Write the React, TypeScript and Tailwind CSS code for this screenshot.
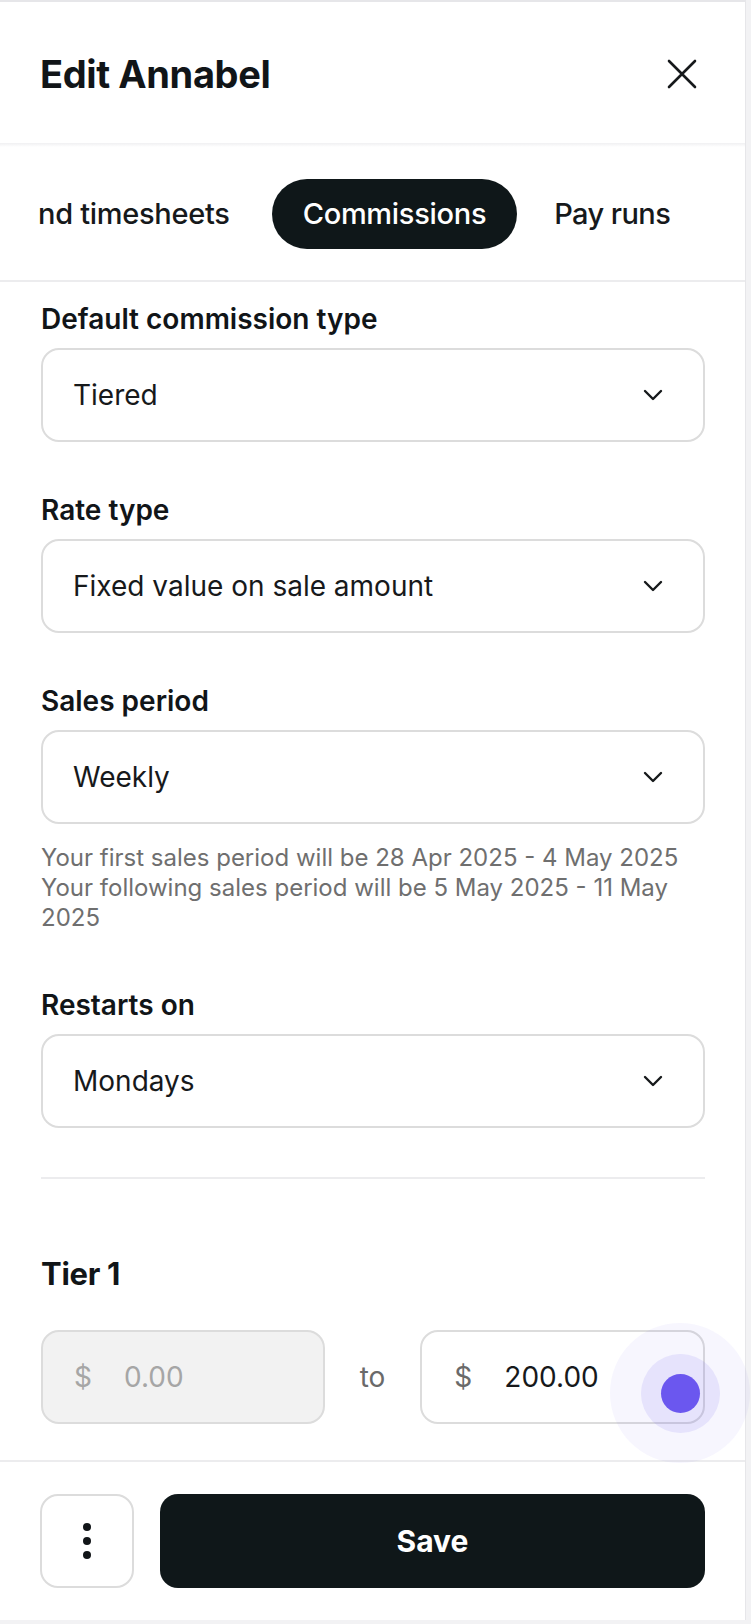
import React from "react";

function Chevron() {
  return (
    <svg width="20" height="12" viewBox="0 0 20 12" fill="none">
      <path d="M2 2 L10 10 L18 2" stroke="#16191b" strokeWidth="2.4" strokeLinecap="round" strokeLinejoin="round" />
    </svg>
  );
}

function Select({ value }: { value: string }) {
  return (
    <div className="mt-[13px] flex h-[94px] items-center justify-between rounded-[18px] border-2 border-[#dcdcdc] bg-white pl-[30px] pr-[40px]">
      <span className="text-[28px] leading-[36px] text-[#17191b]">{value}</span>
      <Chevron />
    </div>
  );
}

function Label({ children, className = "" }: { children: React.ReactNode; className?: string }) {
  return (
    <div className={"text-[28px] font-semibold leading-[32px] text-[#111518] " + className}>
      {children}
    </div>
  );
}

export default function App() {
  return (
    <div className="relative h-[1624px] w-[751px] overflow-hidden bg-[#f2f2f4] font-['Inter',sans-serif]">
      <div className="flex h-[1620px] w-[746px] flex-col border-r border-t-2 border-[#e6e6e9] bg-white">
        {/* Header */}
        <div className="flex h-[141px] items-center justify-between pl-[40px] pr-[48px] pt-[2px]">
          <h1 className="text-[38px] font-bold leading-[44px] tracking-[-0.01em] text-[#111518]">Edit Annabel</h1>
          <svg width="30" height="30" viewBox="0 0 30 30" fill="none">
            <path d="M2 2 L28 28 M28 2 L2 28" stroke="#16191b" strokeWidth="2.6" strokeLinecap="round" />
          </svg>
        </div>
        <div className="h-[4px] bg-gradient-to-b from-[#f0f0f2] to-white" />

        {/* Tabs */}
        <div className="flex h-[135px] items-center overflow-hidden whitespace-nowrap border-b-2 border-[#ececee] pl-[38px]">
          <span className="text-[29px] font-medium leading-[36px] tracking-[-0.01em] text-[#16191b]">nd timesheets</span>
          <span className="ml-[42px] flex h-[70px] items-center rounded-full bg-[#0f1719] px-[31px] text-[29px] font-medium leading-[36px] tracking-[-0.01em] text-white">
            Commissions
          </span>
          <span className="ml-[37px] text-[29px] font-medium leading-[36px] tracking-[-0.02em] text-[#16191b]">Pay runs</span>
        </div>

        {/* Content */}
        <div className="flex-1 overflow-hidden pl-[41px] pr-[40px] pt-[21px]">
          <Label>Default commission type</Label>
          <Select value="Tiered" />

          <Label className="mt-[52px]">Rate type</Label>
          <Select value="Fixed value on sale amount" />

          <Label className="mt-[52px]">Sales period</Label>
          <Select value="Weekly" />
          <p className="mt-[19px] text-[24px] leading-[30px] text-[#6f6f6f]">
            Your first sales period will be 28 Apr 2025 - 4 May 2025
            <br />
            Your following sales period will be 5 May 2025 - 11 May 2025
          </p>

          <Label className="mt-[56px]">Restarts on</Label>
          <Select value="Mondays" />

          <div className="mt-[49px] h-[2px] bg-[#ececee]" />

          <div className="mt-[76px] text-[31px] font-bold leading-[38px] tracking-[-0.01em] text-[#111518]">Tier 1</div>

          <div className="mt-[37px] flex items-center gap-[35px]">
            <div className="flex h-[94px] flex-1 items-center rounded-[18px] border-2 border-[#dcdcdc] bg-[#f2f2f2] pl-[31px]">
              <span className="w-[50px] text-[28px] leading-[36px] text-[#a6a6a6]">$</span>
              <span className="text-[28px] leading-[36px] text-[#a6a6a6]">0.00</span>
            </div>
            <span className="text-[28px] leading-[36px] text-[#6a6a6a]">to</span>
            <div className="flex h-[94px] flex-1 items-center rounded-[18px] border-2 border-[#dcdcdc] bg-white pl-[32px]">
              <span className="w-[50px] text-[28px] leading-[36px] text-[#6a6a6a]">$</span>
              <span className="text-[28px] leading-[36px] text-[#17191b]">200.00</span>
            </div>
          </div>
        </div>

        {/* Footer */}
        <div className="flex gap-[26px] border-t-2 border-[#ececee] px-[40px] pb-[32px] pt-[32px]">
          <button className="flex h-[94px] w-[94px] items-center justify-center rounded-[18px] border-2 border-[#dcdcdc] bg-white">
            <svg width="10" height="38" viewBox="0 0 10 38">
              <circle cx="5" cy="5" r="4" fill="#111518" />
              <circle cx="5" cy="19" r="4" fill="#111518" />
              <circle cx="5" cy="33" r="4" fill="#111518" />
            </svg>
          </button>
          <button className="flex h-[94px] flex-1 items-center justify-center rounded-[18px] bg-[#0f1719] text-[30px] font-bold leading-[36px] text-white">
            Save
          </button>
        </div>
      </div>

      {/* Touch indicator overlay */}
      <div className="absolute left-[610px] top-[1323px] flex h-[140px] w-[140px] items-center justify-center rounded-full bg-[rgba(107,87,239,0.05)]">
        <div className="flex h-[79px] w-[79px] items-center justify-center rounded-full bg-[rgba(107,87,239,0.12)]">
          <div className="h-[39px] w-[39px] rounded-full bg-[#6b57ef]" />
        </div>
      </div>
    </div>
  );
}
